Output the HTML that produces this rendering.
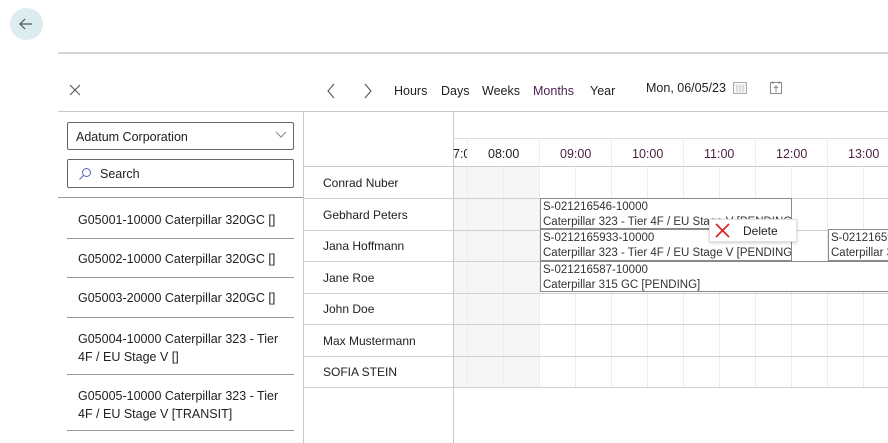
<!DOCTYPE html>
<html><head><meta charset="utf-8"><style>
*{margin:0;padding:0;box-sizing:border-box}
body{width:888px;height:443px;overflow:hidden;background:#fff;font-family:"Segoe UI","Liberation Sans",sans-serif;font-size:12.5px;color:#212121;position:relative}
.a{position:absolute;white-space:nowrap}
.hl{position:absolute;height:1px;background:#c8c8c8}
.vl{position:absolute;width:1px;background:#c8c8c8}
.g{position:absolute;width:1px;background:#ececec}
.ev{position:absolute;border:1px solid #8a8a8a;background:#fff;font-size:11.5px;line-height:15px;padding:1px 2px;overflow:hidden;color:#333;white-space:nowrap}
</style></head><body>
<div class="a" style="left:10px;top:8px;width:33px;height:32px;border-radius:50%;background:#dcecef"></div>
<svg class="a" style="left:18px;top:16px" width="16" height="16" viewBox="0 0 16 16"><path d="M14 8H2M7 3L2 8l5 5" fill="none" stroke="#555" stroke-width="1.2"/></svg>
<div class="a" style="left:58px;top:52px;width:830px;height:2px;background:#d6d6d6"></div>
<svg class="a" style="left:69px;top:84px" width="12" height="12"><path d="M1 1L11 11M11 1L1 11" stroke="#555" stroke-width="1.1"/></svg>
<svg class="a" style="left:326px;top:83px" width="10" height="16"><path d="M8 1L2 8l6 7" fill="none" stroke="#555" stroke-width="1.1"/></svg>
<svg class="a" style="left:363px;top:83px" width="10" height="16"><path d="M2 1l6 7-6 7" fill="none" stroke="#555" stroke-width="1.1"/></svg>
<div class="a" style="left:394px;top:84px">Hours</div>
<div class="a" style="left:441px;top:84px">Days</div>
<div class="a" style="left:482px;top:84px">Weeks</div>
<div class="a" style="left:533px;top:84px;color:#4a1f4f">Months</div>
<div class="a" style="left:590px;top:84px">Year</div>
<div class="a" style="left:646px;top:81px">Mon, 06/05/23</div>
<svg class="a" style="left:733px;top:81px" width="15" height="14"><rect x="0.5" y="1.5" width="13" height="11" fill="none" stroke="#aaa"/><path d="M1 4h13M3 6h9M3 8h9M3 10h9M4 4v9M7 4v9M10 4v9" stroke="#bbb" stroke-width=".6"/></svg>
<svg class="a" style="left:769px;top:80px" width="14" height="15"><rect x="1.5" y="2.5" width="11" height="11" fill="none" stroke="#888"/><path d="M4 1v3M10 1v3M7 6v6M5 8l2-2 2 2" stroke="#888" fill="none"/></svg>
<div class="hl" style="left:58px;top:111px;width:830px"></div>
<div class="vl" style="left:303px;top:111px;height:332px"></div>
<div class="a" style="left:67px;top:122px;width:227px;height:28px;border:1px solid #666;border-radius:2px"></div>
<div class="a" style="left:76px;top:130px">Adatum Corporation</div>
<svg class="a" style="left:275px;top:131px" width="12" height="8"><path d="M1 1l5 5 5-5" fill="none" stroke="#888"/></svg>
<div class="a" style="left:67px;top:159px;width:227px;height:29px;border:1px solid #666;border-radius:2px"></div>
<svg class="a" style="left:78px;top:167px" width="14" height="14"><circle cx="8.5" cy="5.5" r="4" fill="none" stroke="#5566bb"/><path d="M5.5 8.5L1.5 12.5" stroke="#5566bb"/></svg>
<div class="a" style="left:100px;top:167px">Search</div>
<div class="hl" style="left:58px;top:197px;width:245px;background:#999"></div>
<div class="a" style="left:78px;top:213px">G05001-10000 Caterpillar 320GC []</div>
<div class="hl" style="left:67px;top:238px;width:227px;background:#999"></div>
<div class="a" style="left:78px;top:252px">G05002-10000 Caterpillar 320GC []</div>
<div class="hl" style="left:67px;top:277px;width:227px;background:#999"></div>
<div class="a" style="left:78px;top:291px">G05003-20000 Caterpillar 320GC []</div>
<div class="hl" style="left:67px;top:317px;width:227px;background:#999"></div>
<div class="a" style="left:78px;top:330px;line-height:18px">G05004-10000 Caterpillar 323 - Tier<br>4F / EU Stage V []</div>
<div class="hl" style="left:67px;top:374px;width:227px;background:#999"></div>
<div class="a" style="left:78px;top:387px;line-height:18px">G05005-10000 Caterpillar 323 - Tier<br>4F / EU Stage V [TRANSIT]</div>
<div class="hl" style="left:67px;top:430px;width:227px;background:#999"></div>
<div class="a" style="left:453px;top:166px;width:86px;height:221px;background:#f6f6f6"></div>
<div class="vl" style="left:453px;top:111px;height:332px"></div>
<div class="hl" style="left:453px;top:138px;width:435px;background:#ddd"></div>
<div class="hl" style="left:303px;top:166px;width:585px"></div>
<div class="g" style="left:467px;top:138px;height:249px"></div>
<div class="g" style="left:503px;top:166px;height:221px"></div>
<div class="g" style="left:539px;top:138px;height:249px"></div>
<div class="g" style="left:575px;top:166px;height:221px"></div>
<div class="g" style="left:611px;top:138px;height:249px"></div>
<div class="g" style="left:647px;top:166px;height:221px"></div>
<div class="g" style="left:683px;top:138px;height:249px"></div>
<div class="g" style="left:719px;top:166px;height:221px"></div>
<div class="g" style="left:755px;top:138px;height:249px"></div>
<div class="g" style="left:791px;top:166px;height:221px"></div>
<div class="g" style="left:827px;top:138px;height:249px"></div>
<div class="g" style="left:863px;top:166px;height:221px"></div>
<div class="a" style="left:453px;top:147px;width:14px;overflow:hidden">7:00</div>
<div class="a" style="left:488px;top:147px">08:00</div>
<div class="a" style="left:560px;top:147px;color:#4a1f3f">09:00</div>
<div class="a" style="left:632px;top:147px;color:#4a1f3f">10:00</div>
<div class="a" style="left:704px;top:147px;color:#4a1f3f">11:00</div>
<div class="a" style="left:776px;top:147px;color:#4a1f3f">12:00</div>
<div class="a" style="left:848px;top:147px;color:#4a1f3f">13:00</div>
<div class="hl" style="left:303px;top:198px;width:585px;background:#d0d0d0"></div>
<div class="hl" style="left:303px;top:230px;width:585px;background:#d0d0d0"></div>
<div class="hl" style="left:303px;top:261px;width:585px;background:#d0d0d0"></div>
<div class="hl" style="left:303px;top:293px;width:585px;background:#d0d0d0"></div>
<div class="hl" style="left:303px;top:324px;width:585px;background:#d0d0d0"></div>
<div class="hl" style="left:303px;top:356px;width:585px;background:#d0d0d0"></div>
<div class="hl" style="left:303px;top:387px;width:585px;background:#d0d0d0"></div>
<div class="a" style="left:323px;top:176px;font-size:12px">Conrad Nuber</div>
<div class="a" style="left:323px;top:208px;font-size:12px">Gebhard Peters</div>
<div class="a" style="left:323px;top:239px;font-size:12px">Jana Hoffmann</div>
<div class="a" style="left:323px;top:271px;font-size:12px">Jane Roe</div>
<div class="a" style="left:323px;top:302px;font-size:12px">John Doe</div>
<div class="a" style="left:323px;top:334px;font-size:12px">Max Mustermann</div>
<div class="a" style="left:323px;top:365px;font-size:12px">SOFIA STEIN</div>
<div class="ev" style="left:540px;top:198px;width:252px;height:31px">S-021216546-10000<br>Caterpillar 323 - Tier 4F / EU Stage V [PENDING]</div>
<div class="ev" style="left:540px;top:229px;width:252px;height:32px">S-0212165933-10000<br>Caterpillar 323 - Tier 4F / EU Stage V [PENDING]</div>
<div class="ev" style="left:828px;top:229px;width:70px;height:32px">S-02121659<br>Caterpillar 3</div>
<div class="ev" style="left:540px;top:261px;width:360px;height:31px">S-021216587-10000<br>Caterpillar 315 GC [PENDING]</div>
<div class="a" style="left:709px;top:219px;width:88px;height:23px;background:#fff;border:1px solid #e0e0e0;box-shadow:0 1px 3px rgba(0,0,0,.2)"></div>
<svg class="a" style="left:714px;top:222px" width="17" height="17"><path d="M2 2L15 15M15 2L2 15" stroke="#e02020" stroke-width="1.6"/></svg>
<div class="a" style="left:743px;top:224px;font-size:12px">Delete</div>
</body></html>
